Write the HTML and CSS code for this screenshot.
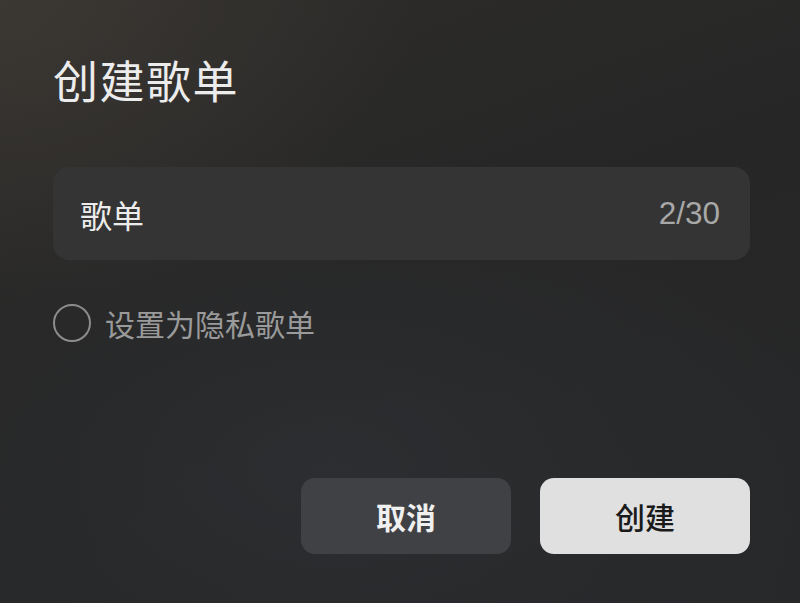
FILE: index.html
```html
<!DOCTYPE html>
<html lang="zh-CN">
<head>
<meta charset="utf-8">
<link rel="stylesheet" href="styles.css">
</head>
<body>
<div class="dialog">
  <h1 class="title">创建歌单</h1>
  <div class="field">
    <span class="field-value">歌单</span>
    <span class="field-count">2/30</span>
  </div>
  <label class="option">
    <span class="radio"></span>
    <span class="option-text">设置为隐私歌单</span>
  </label>
  <div class="actions">
    <button class="btn btn-cancel">取消</button>
    <button class="btn btn-create">创建</button>
  </div>
</div>
</body>
</html>
```
FILE: styles.css
```css
html, body {
  margin: 0;
  padding: 0;
  width: 800px;
  height: 603px;
  overflow: hidden;
  background: #262728;
}
.dialog {
  box-sizing: border-box;
  width: 800px;
  height: 603px;
  padding: 50px 50px 0 53px;
  display: flex;
  flex-direction: column;
  font-family: "Noto Sans CJK SC", "Noto Sans", sans-serif;
  background:
    radial-gradient(ellipse 420px 320px at 0 0, rgba(70,64,58,0.55), rgba(70,64,58,0) 100%),
    radial-gradient(ellipse 500px 300px at 330px 470px, rgba(48,50,54,0.6), rgba(48,50,54,0) 100%),
    linear-gradient(160deg, #2e2d2b 0%, #262626 45%, #27282a 100%);
}
.title {
  margin: 0;
  font-size: 45px;
  line-height: 60px;
  font-weight: 400;
  color: #ececec;
  letter-spacing: 1.5px;
}
.field {
  margin-top: 57px;
  height: 93px;
  border-radius: 16px;
  background: #343434;
  display: flex;
  align-items: center;
  justify-content: space-between;
  padding: 0 30px 0 27px;
}
.field-value {
  font-size: 32px;
  color: #ececec;
}
.field-count {
  font-family: "Liberation Sans", Arial, sans-serif;
  font-size: 31.5px;
  color: #a8a8a8;
}
.option {
  margin-top: 43px;
  display: flex;
  align-items: center;
  gap: 14px;
  height: 40px;
}
.radio {
  box-sizing: border-box;
  width: 38px;
  height: 38px;
  border-radius: 50%;
  border: 2px solid #8c8c8c;
}
.option-text {
  font-size: 30px;
  color: #9a9a9a;
}
.actions {
  margin-top: 135px;
  display: flex;
  justify-content: flex-end;
  gap: 29px;
}
.btn {
  width: 210px;
  height: 76px;
  border: none;
  border-radius: 14px;
  font-family: "Noto Sans CJK SC", "Noto Sans", sans-serif;
  font-size: 30px;
  font-weight: 700;
  padding: 0;
}
.btn-cancel {
  background: #404144;
  color: #f0f0f0;
}
.btn-create {
  background: #e0e0e0;
  color: #1a1a1a;
  font-weight: 500;
}
```
